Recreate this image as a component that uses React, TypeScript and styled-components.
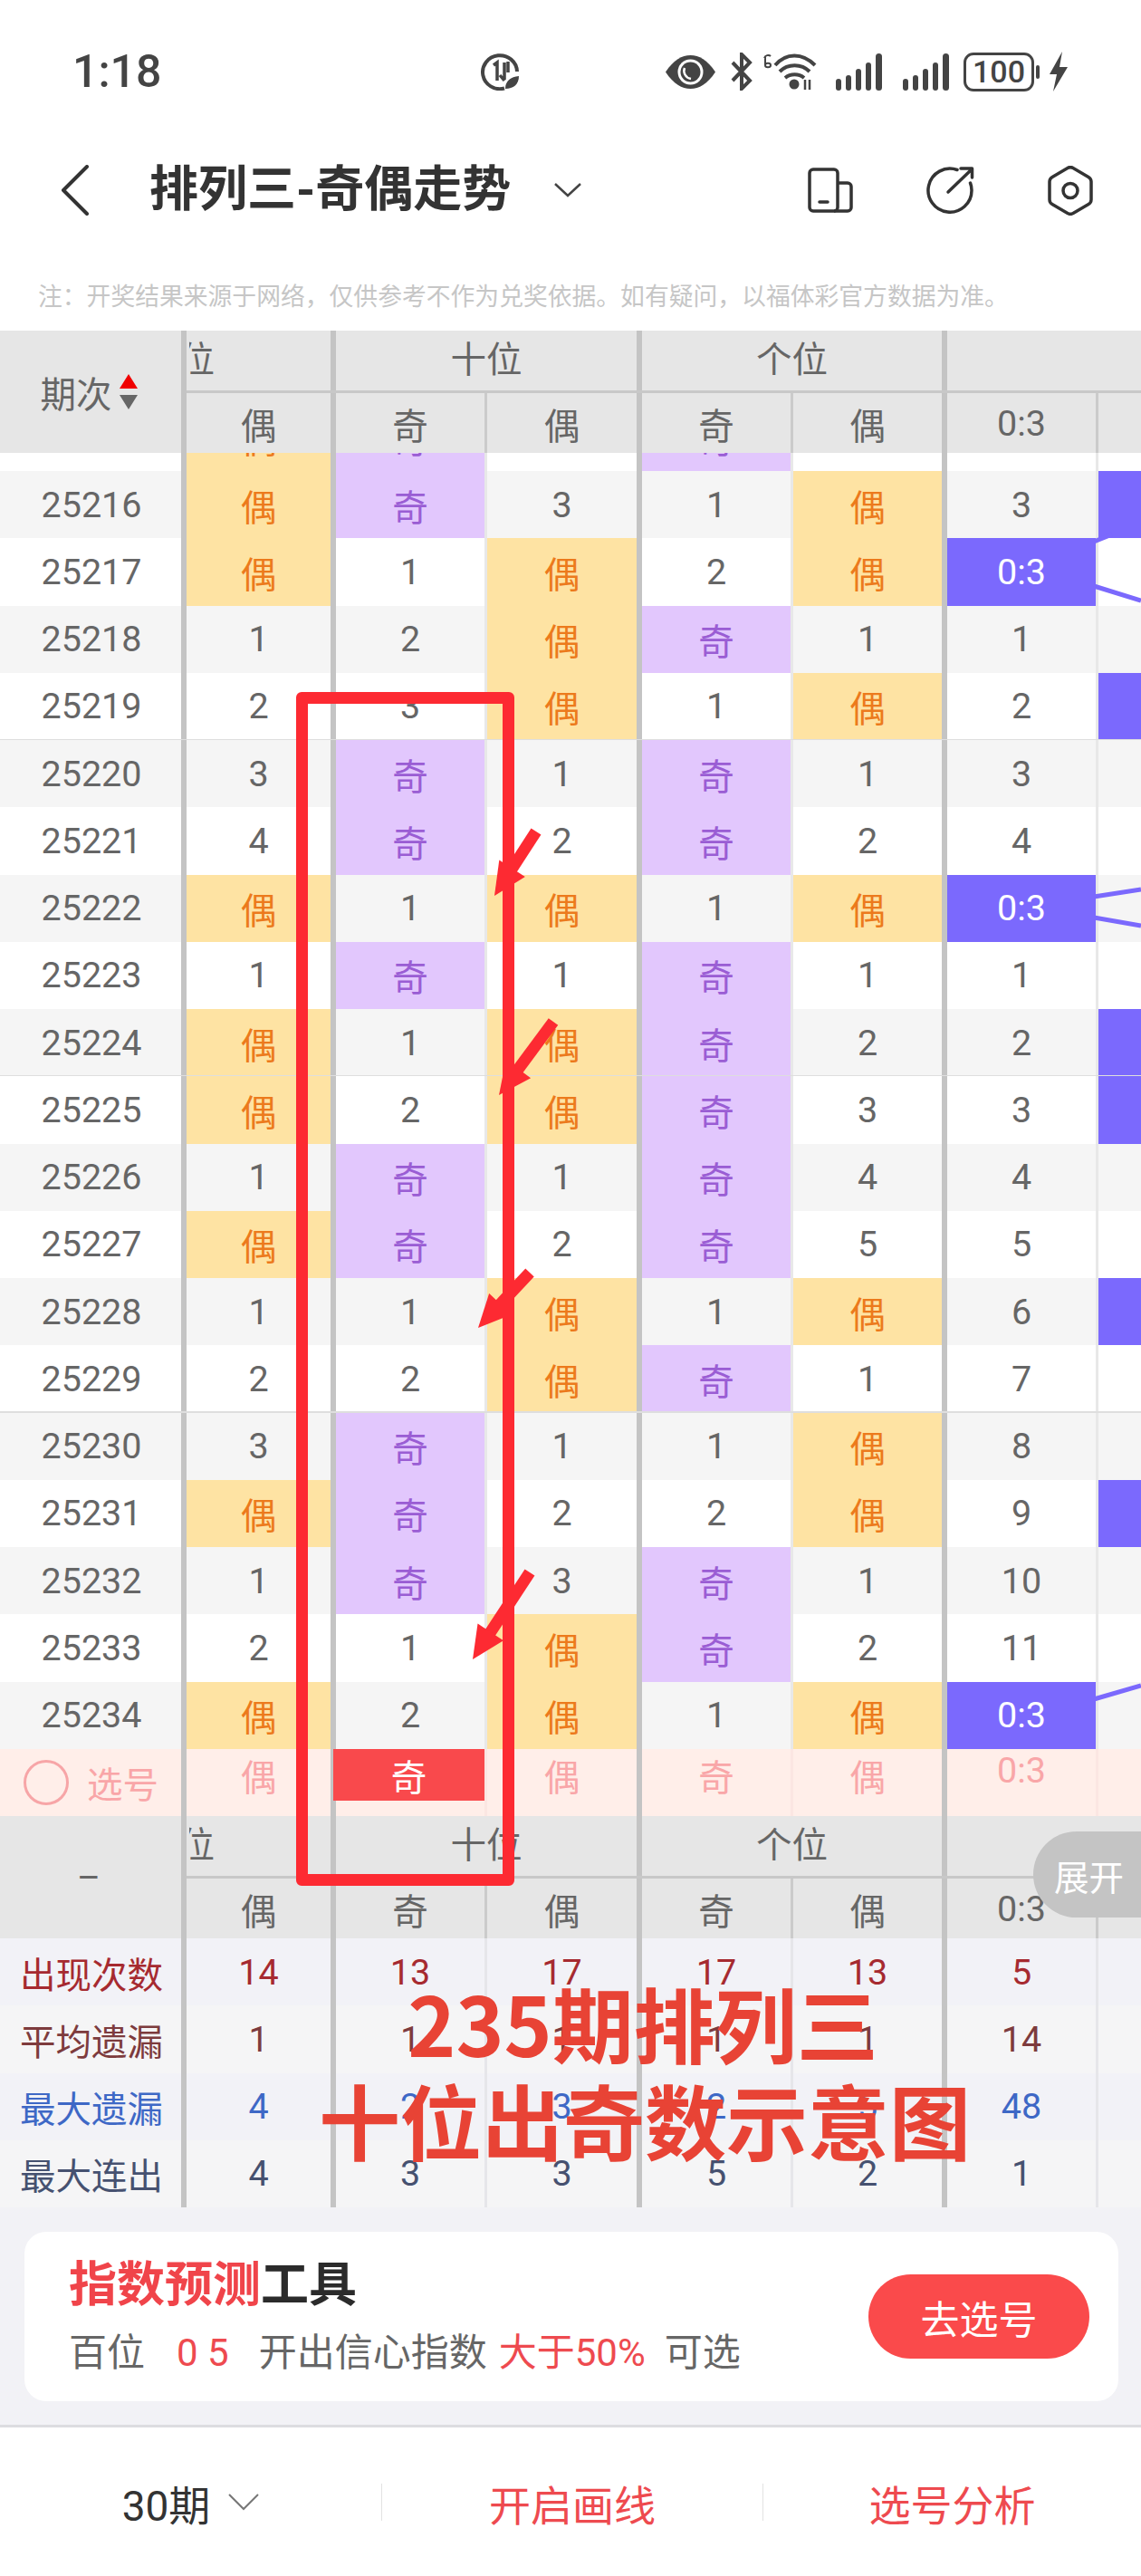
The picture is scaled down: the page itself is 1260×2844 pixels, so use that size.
import React from "react";
import styled, { createGlobalStyle } from "styled-components";

const GlobalStyle = createGlobalStyle`
  html, body {
    margin: 0;
    padding: 0;
    background: #fff;
  }
  * {
    box-sizing: border-box;
  }
  body {
    font-family: Roboto, "Noto Sans CJK SC", sans-serif;
  }
`;

const ROW_H = 74.25;
const COLS = "165px 167px 171px 167px 170px 167px 47px";
const ROW_COLS = `206px ${COLS}`;

type Sep = "thick" | "thin" | "none";

const seps: Sep[] = ["thick", "thin", "thick", "thin", "thick", "thin", "none"];

// id, 百位偶, 十位奇, 十位偶, 个位奇, 个位偶, 0:3, next column filled
const history: [string, string, string, string, string, string, string, boolean][] = [
  ["25215", "偶", "奇", "2", "奇", "1", "2", false],
  ["25216", "偶", "奇", "3", "1", "偶", "3", true],
  ["25217", "偶", "1", "偶", "2", "偶", "0:3", false],
  ["25218", "1", "2", "偶", "奇", "1", "1", false],
  ["25219", "2", "3", "偶", "1", "偶", "2", true],
  ["25220", "3", "奇", "1", "奇", "1", "3", false],
  ["25221", "4", "奇", "2", "奇", "2", "4", false],
  ["25222", "偶", "1", "偶", "1", "偶", "0:3", false],
  ["25223", "1", "奇", "1", "奇", "1", "1", false],
  ["25224", "偶", "1", "偶", "奇", "2", "2", true],
  ["25225", "偶", "2", "偶", "奇", "3", "3", true],
  ["25226", "1", "奇", "1", "奇", "4", "4", false],
  ["25227", "偶", "奇", "2", "奇", "5", "5", false],
  ["25228", "1", "1", "偶", "1", "偶", "6", true],
  ["25229", "2", "2", "偶", "奇", "1", "7", false],
  ["25230", "3", "奇", "1", "1", "偶", "8", false],
  ["25231", "偶", "奇", "2", "2", "偶", "9", true],
  ["25232", "1", "奇", "3", "奇", "1", "10", false],
  ["25233", "2", "1", "偶", "奇", "2", "11", false],
  ["25234", "偶", "2", "偶", "1", "偶", "0:3", false],
];

const stats = [
  { label: "出现次数", color: "#a62a30", bg: "#f2f2f7", values: ["14", "13", "17", "17", "13", "5"] },
  { label: "平均遗漏", color: "#7d3b3d", bg: "#f5f5f6", values: ["1", "1", "1", "1", "1", "14"] },
  { label: "最大遗漏", color: "#3e68c6", bg: "#f2f2f7", values: ["4", "2", "3", "2", "5", "48"] },
  { label: "最大连出", color: "#465170", bg: "#f5f5f6", values: ["4", "3", "3", "5", "2", "1"] },
];

const Page = styled.div`
  position: relative;
  width: 1260px;
  height: 2844px;
  overflow: hidden;
  background: #fff;
`;

const StatusBar = styled.div`
  display: flex;
  align-items: center;
  height: 144px;
  padding: 14px 0 0 80px;
  color: #444;
`;

const Time = styled.div`
  flex: 0 0 450px;
  font-size: 50px;
  font-weight: 500;
  line-height: 50px;
  color: #444;
`;

const StatusIcon = styled.svg<{ $gap?: number }>`
  flex: none;
  display: block;
  margin-left: ${(p) => p.$gap ?? 0}px;
`;

const Battery = styled.div`
  position: relative;
  flex: none;
  width: 78px;
  height: 43px;
  margin-left: 16px;
  border: 3px solid #444;
  border-radius: 11px;
  font-size: 34px;
  font-weight: 500;
  line-height: 37px;
  text-align: center;
  color: #444;
  &::after {
    content: "";
    position: absolute;
    right: -9px;
    top: 11px;
    width: 4px;
    height: 15px;
    border-radius: 2px;
    background: #444;
  }
`;

const NavBar = styled.div`
  display: flex;
  align-items: center;
  height: 132px;
  padding: 0 53px 0 67px;
`;

const Title = styled.div`
  margin: 0 0 0 67px;
  font-size: 54px;
  font-weight: 700;
  line-height: 60px;
  color: #333;
`;

const NavActions = styled.div`
  display: flex;
  align-items: center;
  gap: 81px;
  margin-left: auto;
`;

const Notice = styled.div`
  height: 89px;
  padding: 30px 0 0 42px;
  font-size: 26.8px;
  line-height: 44px;
  color: #c6c6c6;
  white-space: nowrap;
`;

const HeadBlock = styled.div`
  position: relative;
  display: grid;
  grid-template-columns: 206px 1fr;
  height: 135px;
  background: #e6e6e6;
  font-size: 39.5px;
  color: #666;
`;

const IdHead = styled.div`
  display: flex;
  align-items: center;
  justify-content: center;
  gap: 8px;
  padding-right: 4px;
  border-right: 6px solid #c4c4c4;
`;

const SortCarets = styled.div`
  display: flex;
  flex-direction: column;
  gap: 7px;
`;

const Caret = styled.span<{ $up?: boolean }>`
  display: block;
  width: 0;
  height: 0;
  border-left: 10px solid transparent;
  border-right: 10px solid transparent;
  ${(p) => (p.$up ? "border-bottom: 16px solid #f00000;" : "border-top: 16px solid #666;")}
`;

const HeadRows = styled.div`
  display: flex;
  flex-direction: column;
`;

const GroupRow = styled.div`
  display: grid;
  grid-template-columns: 165px 338px 337px 166px;
  height: 69px;
  margin-left: 3px;
  border-bottom: 3px solid #c8c8c8;
  margin-left: 0;
`;

const GroupCell = styled.div<{ $clipped?: boolean; $last?: boolean }>`
  display: flex;
  align-items: center;
  justify-content: ${(p) => (p.$clipped ? "flex-end" : "center")};
  overflow: hidden;
  margin-left: ${(p) => (p.$clipped ? 3 : 0)}px;
  padding-right: ${(p) => (p.$clipped ? 128 : 0)}px;
  border-right: ${(p) => (p.$last ? 0 : 6)}px solid #c4c4c4;
  white-space: nowrap;
  line-height: 60px;
`;

const ColRow = styled.div`
  display: grid;
  grid-template-columns: ${COLS};
  height: 66px;
`;

const ColCell = styled.div<{ $sep: Sep }>`
  display: flex;
  align-items: center;
  justify-content: center;
  border-right: ${(p) => (p.$sep === "thick" ? "6px solid #c4c4c4" : p.$sep === "thin" ? "3px solid #cbcbcb" : "0")};
`;

const Body = styled.div`
  overflow: hidden;
  height: ${20 + ROW_H * 20}px;
`;

const Row = styled.div<{ $shade: boolean; $rule: boolean }>`
  position: relative;
  display: grid;
  grid-template-columns: ${ROW_COLS};
  height: ${ROW_H}px;
  background: ${(p) => (p.$shade ? "#f5f5f5" : "#fff")};
  font-size: 39.5px;
  color: #666;
  &:first-child {
    margin-top: -${ROW_H - 20}px;
  }
  ${(p) =>
    p.$rule &&
    `&::after {
      content: "";
      position: absolute;
      left: 0;
      right: 0;
      bottom: -1.5px;
      height: 3px;
      background: #dedede;
    }`}
`;

const IdCell = styled.div`
  display: flex;
  align-items: center;
  justify-content: center;
  padding-left: 2px;
  border-right: 6px solid #c4c4c4;
`;

type Tone = "plain" | "odd" | "even" | "blue";

const toneBg: Record<Tone, string> = {
  plain: "transparent",
  odd: "#e2c7fd",
  even: "#fee3a3",
  blue: "#7b69fd",
};

const toneText: Record<Tone, string> = {
  plain: "#666",
  odd: "#9a5dd4",
  even: "#ec7a1c",
  blue: "#fff",
};

const Fill = styled.div<{ $tone: Tone }>`
  display: flex;
  align-items: center;
  justify-content: center;
  height: 100%;
  background: ${(p) => toneBg[p.$tone]};
  color: ${(p) => toneText[p.$tone]};
`;

const Cell = styled.div<{ $sep: Sep; $ruleColor?: string }>`
  min-width: 0;
  border-right: ${(p) =>
    p.$sep === "thick"
      ? "6px solid #c4c4c4"
      : p.$sep === "thin"
        ? `3px solid ${p.$ruleColor ?? "#e8e8e8"}`
        : "0"};
`;

const PickRow = styled.div`
  position: relative;
  display: grid;
  grid-template-columns: ${ROW_COLS};
  height: ${ROW_H}px;
  background: #ffeee9;
  font-size: 39.5px;
  color: #f9a6a8;
`;

const PickLabel = styled.div`
  display: flex;
  align-items: center;
  gap: 20px;
  padding-left: 26px;
  border-right: 6px solid #c4c4c4;
`;

const PickCircle = styled.span`
  display: block;
  width: 50px;
  height: 50px;
  border: 3px solid #f7a5a7;
  border-radius: 50%;
`;

const PickCell = styled.div<{ $active?: boolean }>`
  display: flex;
  align-items: center;
  justify-content: center;
  ${(p) => p.$active && "margin-left: -3px; background: #f9494c; color: #fff;"}
`;

const ExpandPill = styled.div`
  position: absolute;
  top: 17px;
  right: 0;
  display: flex;
  align-items: center;
  justify-content: center;
  width: 119px;
  height: 95px;
  padding-left: 4px;
  border-radius: 48px 0 0 48px;
  background: #c4c4c4;
  font-size: 38.5px;
  color: #fff;
`;

const StatRow = styled.div<{ $bg: string; $color: string }>`
  display: grid;
  grid-template-columns: ${ROW_COLS};
  height: ${ROW_H}px;
  background: ${(p) => p.$bg};
  color: ${(p) => p.$color};
  font-size: 39.5px;
`;

const StatValue = styled.div<{ $sep: Sep }>`
  display: flex;
  align-items: center;
  justify-content: center;
  border-right: ${(p) => (p.$sep === "thick" ? "6px solid #c4c4c4" : p.$sep === "thin" ? "3px solid #e6e6ea" : "0")};
`;

const Panel = styled.div`
  height: 243px;
  padding: 27px 25px 26px 27px;
  background: #f2f2f6;
  border-bottom: 3px solid #dcdce0;
`;

const ToolCard = styled.div`
  display: flex;
  align-items: center;
  justify-content: space-between;
  height: 187px;
  padding: 0 32px 0 49px;
  border-radius: 24px;
  background: #fff;
`;

const ToolText = styled.div`
  display: flex;
  flex-direction: column;
  gap: 20px;
`;

const ToolTitle = styled.div`
  font-size: 53px;
  font-weight: 700;
  line-height: 60px;
  color: #2b2b2b;
  em {
    font-style: normal;
    color: #f0444a;
  }
`;

const ToolLine = styled.div`
  display: flex;
  font-size: 42px;
  line-height: 50px;
  color: #666;
  white-space: nowrap;
`;

const ToolBit = styled.span<{ $gap?: number; $red?: boolean }>`
  margin-left: ${(p) => p.$gap ?? 0}px;
  color: ${(p) => (p.$red ? "#ee4a4f" : "#666")};
`;

const ToolButton = styled.button`
  width: 244px;
  height: 93px;
  padding: 0;
  border: 0;
  border-radius: 47px;
  background: #fa4a4b;
  font-family: inherit;
  font-size: 43px;
  color: #fff;
`;

const BottomBar = styled.div`
  display: grid;
  grid-template-columns: 421px 421px 418px;
  height: 164px;
  padding: 62px 0 22px;
`;

const BottomItem = styled.div<{ $red?: boolean; $divided?: boolean }>`
  display: flex;
  align-items: center;
  justify-content: center;
  gap: 20px;
  height: 41px;
  border-left: ${(p) => (p.$divided ? "1px solid #e2e2e2" : "0")};
  font-size: 46px;
  color: ${(p) => (p.$red ? "#ee4a4f" : "#333")};
`;

const RedFrame = styled.div`
  position: absolute;
  left: 327px;
  top: 764px;
  width: 241px;
  height: 1318px;
  border: 13px solid #fd2a32;
  border-radius: 6px;
`;

const Overlay = styled.svg`
  position: absolute;
  left: 0;
  top: 0;
  pointer-events: none;
`;

const Caption = styled.div`
  position: absolute;
  left: 352px;
  top: 2179px;
  width: 716px;
  font-family: "Noto Sans CJK SC", sans-serif;
  font-size: 90px;
  font-weight: 700;
  line-height: 107px;
  text-align: center;
  color: #e84335;
  white-space: nowrap;
`;

const toneOf = (v: string, col: number): Tone => {
  if (v === "奇") return "odd";
  if (v === "偶") return "even";
  if (col === 5 && v === "0:3") return "blue";
  return "plain";
};

const Head = ({ id, pill }: { id: React.ReactNode; pill?: boolean }) => (
  <HeadBlock>
    <IdHead>{id}</IdHead>
    <HeadRows>
      <GroupRow>
        <GroupCell $clipped>百位</GroupCell>
        <GroupCell>十位</GroupCell>
        <GroupCell>个位</GroupCell>
        <GroupCell $last />
      </GroupRow>
      <ColRow>
        {["偶", "奇", "偶", "奇", "偶", "0:3", ""].map((t, i) => (
          <ColCell key={i} $sep={seps[i]}>
            {t}
          </ColCell>
        ))}
      </ColRow>
    </HeadRows>
    {pill && <ExpandPill>展开</ExpandPill>}
  </HeadBlock>
);

const arrows = [
  [592, 918, 546, 989],
  [611, 1128, 551, 1209],
  [585, 1405, 528, 1466],
  [585, 1736, 522, 1832],
];

const arrowHead = (x1: number, y1: number, x2: number, y2: number) => {
  const len = Math.hypot(x2 - x1, y2 - y1);
  const ux = (x2 - x1) / len;
  const uy = (y2 - y1) / len;
  const bx = x2 - ux * 36;
  const by = y2 - uy * 36;
  return `${x2},${y2} ${bx - uy * 17},${by + ux * 17} ${bx + uy * 17},${by - ux * 17}`;
};

export default function App() {
  return (
    <Page>
      <GlobalStyle />
      <StatusBar>
        <Time>1:18</Time>
        <StatusIcon width="45" height="41" viewBox="0 0 45 41" fill="none" stroke="#444">
          <path d="M27 38.5A19 18.5 0 1 1 41 20" strokeWidth="4" />
          <path d="M15 13l4-3v20M27 10v19M27 30l-5-6M31 9v12" strokeWidth="3.5" />
          <path d="M28 39c0-9 6-13 15-14 0 9-6 14-15 14z" fill="#444" stroke="none" />
        </StatusIcon>
        <StatusIcon $gap={160} width="55" height="37" viewBox="0 0 55 37">
          <path d="M0 18.5C9 5 18 0 27.5 0S46 5 55 18.5C46 32 37 37 27.5 37S9 32 0 18.5z" fill="#444" />
          <circle cx="27.5" cy="18.5" r="14" fill="#fff" />
          <circle cx="27.5" cy="18.5" r="11" fill="#444" />
          <path d="M21 14c-2 5 1 11 7 12" stroke="#fff" strokeWidth="2.5" fill="none" />
        </StatusIcon>
        <StatusIcon $gap={16} width="26" height="42" viewBox="0 0 26 42" fill="none" stroke="#444" strokeWidth="4">
          <path d="M3 11l19 20-9 9V2l9 9L3 31" />
        </StatusIcon>
        <StatusIcon $gap={10} width="60" height="42" viewBox="0 0 60 42" fill="none" stroke="#444" strokeWidth="4">
          <path d="M14 14C26 0 44 0 58 14M19 21c9-9 24-9 33 0M25 28c6-5 15-5 21 0" />
          <circle cx="35" cy="35" r="5.5" fill="#444" stroke="none" />
          <path d="M2 6c1-3 5-4 7-2M3 5v9c0 3 6 3 6 0s-6-3-6 0" strokeWidth="2" />
          <path d="M47 30v11M52 30v11" strokeWidth="2.5" />
        </StatusIcon>
        {[21, 23].map((gap) => (
          <StatusIcon key={gap} $gap={gap} width="51" height="41" viewBox="0 0 51 41" fill="#444">
            <rect x="0" y="28" width="6" height="13" rx="3" />
            <rect x="11" y="24" width="6" height="17" rx="3" />
            <rect x="22" y="17" width="6" height="24" rx="3" />
            <rect x="33" y="10" width="6" height="31" rx="3" />
            <rect x="44" y="0" width="7" height="41" rx="3.5" />
          </StatusIcon>
        ))}
        <Battery>100</Battery>
        <StatusIcon $gap={17} width="20" height="44" viewBox="0 0 20 44" fill="#444">
          <path d="M14 0L0 25h8L4 44l16-27h-9z" />
        </StatusIcon>
      </StatusBar>

      <NavBar>
        <svg width="31" height="56" viewBox="0 0 31 56" fill="none" stroke="#333" strokeWidth="4" strokeLinecap="round" strokeLinejoin="round" style={{ flex: "none" }}>
          <path d="M29 2L3 28l26 26" />
        </svg>
        <Title>排列三-奇偶走势</Title>
        <svg width="30" height="16" viewBox="0 0 30 16" fill="none" stroke="#444" strokeWidth="2.5" style={{ flex: "none", marginLeft: 48 }}>
          <path d="M1 1l14 13L29 1" />
        </svg>
        <NavActions>
          <svg width="50" height="50" viewBox="0 0 50 50" fill="none" stroke="#333" strokeWidth="3.5" strokeLinejoin="round">
            <rect x="2" y="2" width="31" height="46" rx="4" />
            <path d="M33 17h11a4 4 0 0 1 4 4v23a4 4 0 0 1-4 4H29" />
            <path d="M13 38h9" strokeLinecap="round" />
          </svg>
          <svg width="53" height="52" viewBox="0 0 53 52" fill="none" stroke="#333" strokeWidth="3.5" strokeLinecap="round" strokeLinejoin="round">
            <path d="M34 3.5A24 24 0 1 0 50 26c0-3-.5-5.500-1.500-8" />
            <path d="M24 28L50 3M38 2h12.500v10" />
          </svg>
          <svg width="50" height="55" viewBox="0 0 50 55" fill="none" stroke="#333" strokeWidth="3.5" strokeLinejoin="round">
            <path d="M22 2.500a6 6 0 0 1 6 0l17 10a6 6 0 0 1 3 5v20a6 6 0 0 1-3 5l-17 10a6 6 0 0 1-6 0l-17-10a6 6 0 0 1-3-5v-20a6 6 0 0 1 3-5z" />
            <circle cx="25" cy="27.500" r="8" />
          </svg>
        </NavActions>
      </NavBar>

      <Notice>注：开奖结果来源于网络，仅供参考不作为兑奖依据。如有疑问，以福体彩官方数据为准。</Notice>

      <Head
        id={
          <>
            期次
            <SortCarets>
              <Caret $up />
              <Caret />
            </SortCarets>
          </>
        }
      />

      <Body>
        {history.map(([id, ...rest], r) => {
          const cells = rest.slice(0, 6) as string[];
          const filled = rest[6] as boolean;
          return (
            <Row key={id} $shade={r % 2 === 1} $rule={r === 4 || r === 9 || r === 14}>
              <IdCell>{id}</IdCell>
              {cells.map((v, c) => (
                <Cell key={c} $sep={seps[c]}>
                  <Fill $tone={toneOf(v, c)}>{v}</Fill>
                </Cell>
              ))}
              <Cell $sep="none">
                <Fill $tone={filled ? "blue" : "plain"} />
              </Cell>
            </Row>
          );
        })}
        <PickRow>
          <PickLabel>
            <PickCircle />
            选号
          </PickLabel>
          {["偶", "奇", "偶", "奇", "偶", "0:3", ""].map((t, i) => (
            <Cell key={i} $sep={seps[i]} $ruleColor="#fbe6e2">
              <PickCell $active={i === 1}>{t}</PickCell>
            </Cell>
          ))}
        </PickRow>
      </Body>

      <Head id="–" pill />

      {stats.map((s) => (
        <StatRow key={s.label} $bg={s.bg} $color={s.color}>
          <IdCell>{s.label}</IdCell>
          {[...s.values, ""].map((v, i) => (
            <StatValue key={i} $sep={seps[i]}>
              {v}
            </StatValue>
          ))}
        </StatRow>
      ))}

      <Panel>
        <ToolCard>
          <ToolText>
            <ToolTitle>
              <em>指数预测</em>工具
            </ToolTitle>
            <ToolLine>
              <ToolBit>百位</ToolBit>
              <ToolBit $gap={35} $red>
                0 5
              </ToolBit>
              <ToolBit $gap={33}>开出信心指数</ToolBit>
              <ToolBit $gap={13} $red>
                大于50%
              </ToolBit>
              <ToolBit $gap={21}>可选</ToolBit>
            </ToolLine>
          </ToolText>
          <ToolButton>去选号</ToolButton>
        </ToolCard>
      </Panel>

      <BottomBar>
        <BottomItem>
          30期
          <svg width="34" height="19" viewBox="0 0 34 19" fill="none" stroke="#777" strokeWidth="2">
            <path d="M1 1l16 16L33 1" />
          </svg>
        </BottomItem>
        <BottomItem $red $divided>
          开启画线
        </BottomItem>
        <BottomItem $red $divided>
          选号分析
        </BottomItem>
      </BottomBar>

      <Overlay width="1260" height="2844" viewBox="0 0 1260 2844" fill="none">
        <g stroke="#7b69fd" strokeWidth="5">
          <path d="M1208 598L1228 590" />
          <path d="M1208 647L1260 663" />
          <path d="M1208 990L1260 982" />
          <path d="M1208 1013L1260 1022" />
          <path d="M1208 1876L1260 1861" />
        </g>
        <g stroke="#fd2a32" strokeWidth="13">
          {arrows.map(([x1, y1, x2, y2], i) => (
            <line key={i} x1={x1} y1={y1} x2={x1 + (x2 - x1) * 0.8} y2={y1 + (y2 - y1) * 0.8} />
          ))}
        </g>
        <g fill="#fd2a32">
          {arrows.map(([x1, y1, x2, y2], i) => (
            <polygon key={i} points={arrowHead(x1, y1, x2, y2)} />
          ))}
        </g>
      </Overlay>
      <RedFrame />
      <Caption>
        235期排列三
        <br />
        十位出奇数示意图
      </Caption>
    </Page>
  );
}
